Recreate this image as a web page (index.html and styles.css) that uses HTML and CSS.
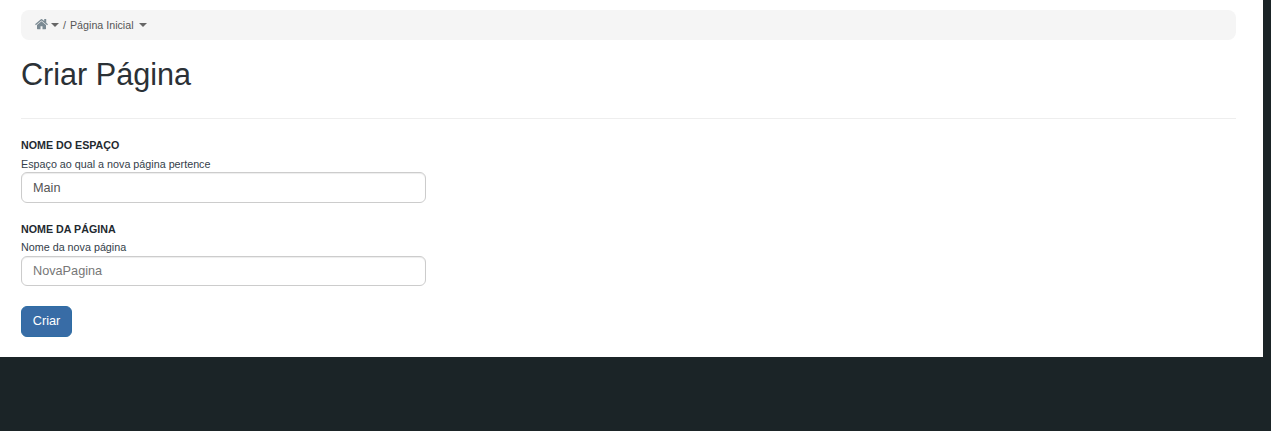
FILE: index.html
```html
<!DOCTYPE html>
<html lang="pt">
<head>
<meta charset="utf-8">
<title>Criar Página</title>
<link rel="stylesheet" href="styles.css">
</head>
<body>
<main class="page">
  <nav class="breadcrumb">
    <svg class="home" viewBox="0 0 1664 1408" width="13" height="11" aria-hidden="true"><path fill="currentColor" d="M1408 768v480q0 26-19 45t-45 19H960V928H704v384H320q-26 0-45-19t-19-45V768q0-1 .5-3t.5-3l575-474 575 474q1 2 1 6zm223-69-62 74q-8 9-21 11h-3q-13 0-21-7L832 200 140 777q-12 8-24 7-13-2-21-11l-62-74q-8-10-7-23.500t11-21.500L756 26q32-26 76-26t76 26l272 227V36q0-14 9-23t23-9h192q14 0 23 9t9 23v454l219 182q10 8 11 21.500t-7 23.500z"/></svg>
    <span class="caret"></span>
    <span class="sep">/</span>
    <span class="crumb">Página Inicial</span>
    <span class="caret caret-end"></span>
  </nav>
  <h1 class="title">Criar Página</h1>
  <hr class="rule">
  <form class="form">
    <div class="field field-space">
      <label class="label" for="space">Nome do Espaço</label>
      <span class="help">Espaço ao qual a nova página pertence</span>
      <input class="input input-value" id="space" type="text" value="Main">
    </div>
    <div class="field field-name">
      <label class="label" for="name">Nome da Página</label>
      <span class="help">Nome da nova página</span>
      <input class="input input-short" id="name" type="text" placeholder="NovaPagina">
    </div>
    <button class="button" type="button">Criar</button>
  </form>
</main>
</body>
</html>
```

FILE: styles.css
```css
* { box-sizing: border-box; }
html, body { margin: 0; padding: 0; }
body {
  background: #1b2427;
  font-family: "Liberation Sans", Arial, sans-serif;
  color: #333;
  height: 431px;
  overflow: hidden;
}
.page {
  width: 1263px;
  height: 357px;
  background: #fff;
  padding: 10px 27px 0 21px;
}
.breadcrumb {
  display: flex;
  align-items: center;
  height: 30px;
  padding: 0 14px 1px;
  background: #f5f5f5;
  border-radius: 8px;
  font-size: 10.7px;
  color: #555;
}
.home { color: #7b8a93; }
.caret {
  width: 0;
  height: 0;
  margin-left: 3px;
  border-top: 4px solid #666;
  border-left: 4px solid transparent;
  border-right: 4px solid transparent;
}
.caret-end { margin-left: 5px; }
.sep { margin: 0 4px 0 4px; }
.title {
  margin: 17px 0 0;
  font-size: 30.6px;
  line-height: 35px;
  font-weight: 400;
  color: #2b3136;
}
.rule {
  margin: 26px 0 0;
  border: 0;
  border-top: 1px solid #eee;
}
.form { padding-top: 19px; }
.field { display: flex; flex-direction: column; margin-bottom: 20px; }
.field-space { margin-bottom: 19px; }
.label {
  font-size: 10.7px;
  line-height: 15px;
  font-weight: 700;
  text-transform: uppercase;
  color: #1f2a30;
  margin-bottom: 4px;
}
.help {
  font-size: 10.75px;
  line-height: 15px;
  color: #34404a;
}
.field-name .help { line-height: 13px; margin-bottom: 2px; }
.input {
  width: 405px;
  height: 31px;
  padding: 0 11px;
  border: 1px solid #ccc;
  border-radius: 6px;
  background: #fff;
  font: 12.7px "Liberation Sans", Arial, sans-serif;
  box-shadow: inset 0 1px 1px rgba(0,0,0,.075);
}
.input-short { height: 30px; }
.input::placeholder { color: #777; opacity: 1; }
.input-value { color: #555; }
.button {
  display: block;
  width: 51px;
  height: 31px;
  padding: 0 0 2px;
  border: 1px solid #2e6da4;
  border-radius: 6px;
  background: #386ca6;
  color: #fff;
  font: 12.7px "Liberation Sans", Arial, sans-serif;
}
```
